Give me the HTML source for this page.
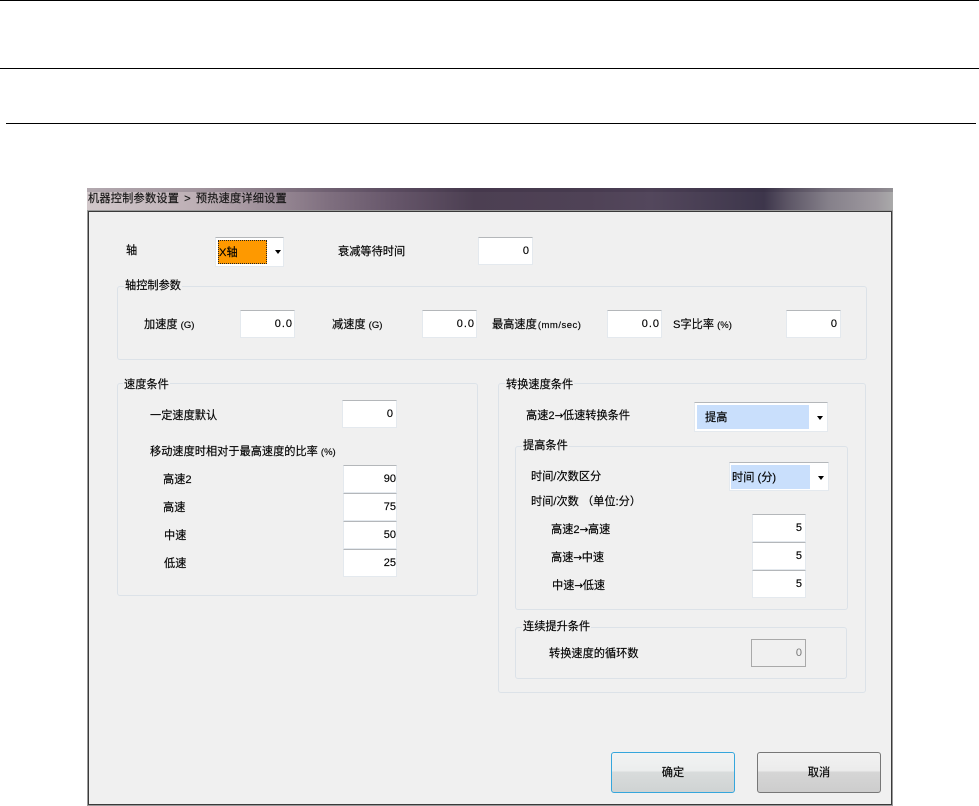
<!DOCTYPE html>
<html lang="zh"><head><meta charset="utf-8"><style>
html,body{margin:0;padding:0;background:#fff}
body{width:979px;height:806px;position:relative;overflow:hidden;font:11.2px "WenQuanYi Zen Hei","Liberation Sans","Noto Sans CJK SC",sans-serif;color:#000;-webkit-text-stroke:.15px #000}
div{position:absolute;box-sizing:border-box}
.l{white-space:nowrap;height:14px;line-height:14px;margin-top:1px}
.i{background:#fff;border:1px solid #e4e9ee;border-top-color:#b4b7ba;text-align:right;padding-right:3px;line-height:26px;font-family:"Liberation Sans",sans-serif;font-size:11px}
.t{padding-right:0}
.w{letter-spacing:1px;padding-right:1px}
.g{border:1px solid #dce2e8;border-radius:3px}
.c{background:#fff;border:1px solid #e4e9ee;border-top-color:#b4b7ba}
.h{background:#c9dffc;line-height:26px;white-space:nowrap}
.a{width:0;height:0;border-style:solid;border-color:#000 transparent transparent;border-width:4px 3.5px 0}
.b{border-radius:3px;text-align:center;line-height:41px;background:linear-gradient(#f2f3f3 0,#ebeded 47%,#d9dcdc 48%,#cfd3d3 100%)}
.legend{background:#f0f0f0;padding:0 1px}
.s{font-size:9.5px;font-family:"Liberation Sans",sans-serif}
.r{font-family:"DejaVu Sans",sans-serif;font-size:10.5px;letter-spacing:-.5px}
</style></head><body>
<div style="left:0;top:0;width:979px;height:1px;background:#000"></div>
<div style="left:0;top:68px;width:979px;height:1px;background:#000"></div>
<div style="left:6px;top:123px;width:970px;height:1px;background:#000"></div>

<div style="left:87px;top:188px;width:806px;height:23px;background:linear-gradient(90deg,#d2c8cb 0,#bcaeb4 14%,#7f6f7f 30%,#66566a 38%,#4c3f52 48%,#4f4256 62%,#53475c 70%,#3d364b 84%,#5d5666 87%,#85808a 92%,#9e999f 98%,#aaa 100%)"></div>
<div style="left:87px;top:188px;width:806px;height:4px;background:rgba(40,30,50,.18)"></div>
<div class="l" style="left:88px;top:191px;color:#1a1a1a;letter-spacing:.2px">机器控制参数设置<span style="margin:0 5px">&gt;</span>预热速度详细设置</div>
<div style="left:87px;top:210px;width:806px;height:596px;background:#9a9a9a"></div>
<div style="left:88px;top:211px;width:804px;height:594px;background:#f0f0f0;border:1px solid #3a3a3a"></div>

<div class="l" style="left:126px;top:243px">轴</div>
<div class="c" style="left:215px;top:237px;width:69px;height:30px"></div>
<div class="h" style="left:218px;top:240px;width:49px;height:24px;background:#fe9900;outline:1px dotted #222;outline-offset:-1px;padding-left:1px">X轴</div>
<div class="a" style="left:274.5px;top:250px"></div>
<div class="l" style="left:338px;top:244px">衰减等待时间</div>
<div class="i" style="left:478px;top:237px;width:55px;height:28px">0</div>

<div class="g" style="left:117px;top:286px;width:750px;height:74px"></div>
<div class="l legend" style="left:124px;top:278px">轴控制参数</div>
<div class="l" style="left:144px;top:317px">加速度 <span class="s">(G)</span></div>
<div class="i w" style="left:240px;top:310px;width:55px;height:28px">0.0</div>
<div class="l" style="left:332px;top:317px">减速度 <span class="s">(G)</span></div>
<div class="i w" style="left:422px;top:310px;width:55px;height:28px">0.0</div>
<div class="l" style="left:492px;top:317px">最高速度 <span class="s" style="margin-left:-2px;letter-spacing:.5px">(mm/sec)</span></div>
<div class="i w" style="left:607px;top:310px;width:55px;height:28px">0.0</div>
<div class="l" style="left:673px;top:317px">S字比率 <span class="s">(%)</span></div>
<div class="i" style="left:786px;top:310px;width:55px;height:28px">0</div>

<div class="g" style="left:117px;top:383px;width:361px;height:213px"></div>
<div class="l legend" style="left:123px;top:377px">速度条件</div>
<div class="l" style="left:150px;top:408px">一定速度默认</div>
<div class="i" style="left:342px;top:400px;width:55px;height:28px">0</div>
<div class="l" style="left:150px;top:444px">移动速度时相对于最高速度的比率 <span class="s">(%)</span></div>
<div class="l" style="left:163px;top:472px">高速2</div>
<div class="i t" style="left:343px;top:465px;width:54px;height:28px">90</div>
<div class="l" style="left:163px;top:500px">高速</div>
<div class="i t" style="left:343px;top:493px;width:54px;height:28px">75</div>
<div class="l" style="left:164px;top:528px">中速</div>
<div class="i t" style="left:343px;top:521px;width:54px;height:28px">50</div>
<div class="l" style="left:164px;top:556px">低速</div>
<div class="i t" style="left:343px;top:549px;width:54px;height:28px">25</div>

<div class="g" style="left:498px;top:383px;width:368px;height:310px"></div>
<div class="l legend" style="left:505px;top:377px">转换速度条件</div>
<div class="l" style="left:526px;top:408px">高速2<span class="r">→</span>低速转换条件</div>
<div class="c" style="left:694px;top:402px;width:134px;height:30px"></div>
<div class="h" style="left:697px;top:405px;width:112px;height:24px;padding-left:8px">提高</div>
<div class="a" style="left:816.5px;top:416px"></div>

<div class="g" style="left:515px;top:446px;width:333px;height:164px"></div>
<div class="l legend" style="left:522px;top:438px">提高条件</div>
<div class="l" style="left:531px;top:469px">时间/次数区分</div>
<div class="c" style="left:729px;top:462px;width:100px;height:29px"></div>
<div class="h" style="left:731px;top:465px;width:79px;height:24px;padding-left:1px">时间 (分)</div>
<div class="a" style="left:818px;top:476px"></div>
<div class="l" style="left:531px;top:494px">时间/次数 （单位:分）</div>
<div class="l" style="left:551px;top:522px">高速2<span class="r">→</span>高速</div>
<div class="i" style="left:752px;top:514px;width:54px;height:28px">5</div>
<div class="l" style="left:551px;top:550px">高速<span class="r">→</span>中速</div>
<div class="i" style="left:752px;top:542px;width:54px;height:28px">5</div>
<div class="l" style="left:552px;top:578px">中速<span class="r">→</span>低速</div>
<div class="i" style="left:752px;top:570px;width:54px;height:28px">5</div>

<div class="g" style="left:515px;top:627px;width:332px;height:52px"></div>
<div class="l legend" style="left:522px;top:619px">连续提升条件</div>
<div class="l" style="left:549px;top:646px">转换速度的循环数</div>
<div class="i" style="left:751px;top:639px;width:55px;height:28px;background:#f0f0f0;border:1px solid #a9a9a9;color:#777;-webkit-text-stroke:0">0</div>

<div class="b" style="left:611px;top:752px;width:124px;height:41px;border:1px solid #35a6dc">确定</div>
<div class="b" style="left:757px;top:752px;width:124px;height:41px;border:1px solid #777;background:linear-gradient(#f2f2f2 0,#ebebeb 47%,#d6d6d6 48%,#cdcdcd 100%)">取消</div>
</body></html>
